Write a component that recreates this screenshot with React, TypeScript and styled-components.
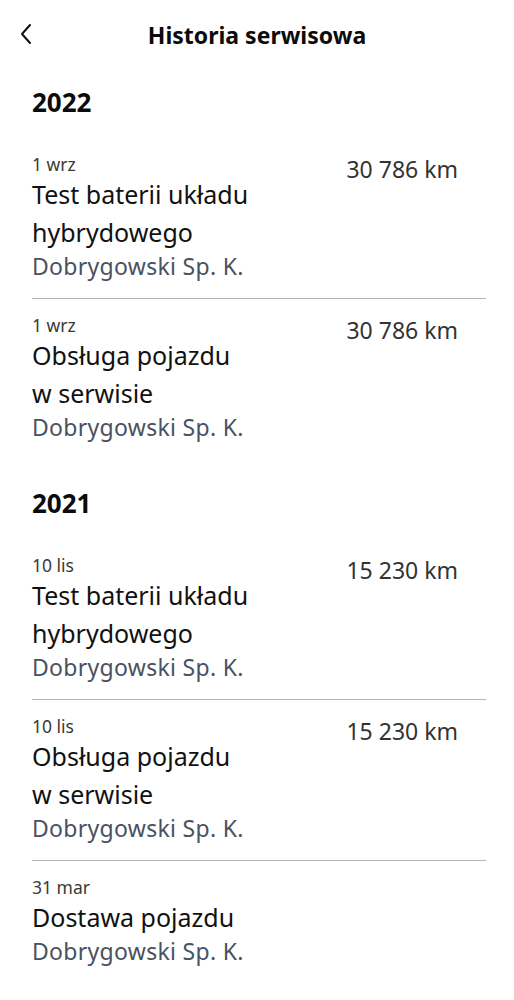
import React from 'react'
import styled, { createGlobalStyle } from 'styled-components'

const GlobalStyle = createGlobalStyle`
  body {
    margin: 0;
    background: #ffffff;
    font-family: "Noto Sans", "Liberation Sans", sans-serif;
    color: #111111;
  }
`

const Page = styled.div`
  width: 514px;
  min-height: 1000px;
  background: #ffffff;
`

const Header = styled.header`
  position: relative;
  height: 70px;
  display: flex;
  align-items: center;
  justify-content: center;
`

const BackButton = styled.button`
  position: absolute;
  left: 14px;
  top: 22px;
  width: 24px;
  height: 24px;
  padding: 0;
  border: none;
  background: none;
  display: flex;
  align-items: center;
  justify-content: center;
`

const Title = styled.h1`
  margin: 0;
  font-size: 23px;
  font-weight: 700;
  line-height: 70px;
  color: #0b0b0b;
`

const Section = styled.section`
  padding: 16px 28px 11px 32px;
`

const Year = styled.h2`
  margin: 0 0 20px;
  font-size: 26px;
  line-height: 32px;
  font-weight: 700;
  color: #0b0b0b;
`

const Item = styled.div<{ $divider: boolean }>`
  display: flex;
  justify-content: space-between;
  align-items: flex-start;
  padding: 16px 28px 17px 0;
  border-bottom: ${p => (p.$divider ? '1px solid #b4b4b4' : '1px solid transparent')};
`

const Info = styled.div`
  display: flex;
  flex-direction: column;
  width: 220px;
`

const DateText = styled.span`
  font-size: 17.5px;
  line-height: 21px;
  color: #3a3a3a;
`

const Name = styled.span`
  font-size: 25px;
  line-height: 38px;
  color: #111111;
`

const Workshop = styled.span`
  font-size: 23px;
  line-height: 30px;
  letter-spacing: 0.3px;
  color: #4a5160;
  white-space: nowrap;
`

const Mileage = styled.span`
  font-size: 23px;
  line-height: 30px;
  color: #333333;
  white-space: nowrap;
`

type Entry = { date: string; name: string; km?: string }

const groups: { year: string; items: Entry[] }[] = [
  {
    year: '2022',
    items: [
      { date: '1 wrz', name: 'Test baterii układu hybrydowego', km: '30 786 km' },
      { date: '1 wrz', name: 'Obsługa pojazdu w serwisie', km: '30 786 km' },
    ],
  },
  {
    year: '2021',
    items: [
      { date: '10 lis', name: 'Test baterii układu hybrydowego', km: '15 230 km' },
      { date: '10 lis', name: 'Obsługa pojazdu w serwisie', km: '15 230 km' },
      { date: '31 mar', name: 'Dostawa pojazdu' },
    ],
  },
]

export default function App() {
  return (
    <Page>
      <GlobalStyle />
      <Header>
        <BackButton aria-label="Wstecz">
          <svg width="14" height="22" viewBox="0 0 14 22" fill="none">
            <path d="M11 2 L3 11 L11 20" stroke="#111" strokeWidth="2" strokeLinecap="round" strokeLinejoin="round" />
          </svg>
        </BackButton>
        <Title>Historia serwisowa</Title>
      </Header>
      {groups.map(group => (
        <Section key={group.year}>
          <Year>{group.year}</Year>
          {group.items.map((item, i) => (
            <Item key={i} $divider={i < group.items.length - 1}>
              <Info>
                <DateText>{item.date}</DateText>
                <Name>{item.name}</Name>
                <Workshop>Dobrygowski Sp. K.</Workshop>
              </Info>
              {item.km && <Mileage>{item.km}</Mileage>}
            </Item>
          ))}
        </Section>
      ))}
    </Page>
  )
}
